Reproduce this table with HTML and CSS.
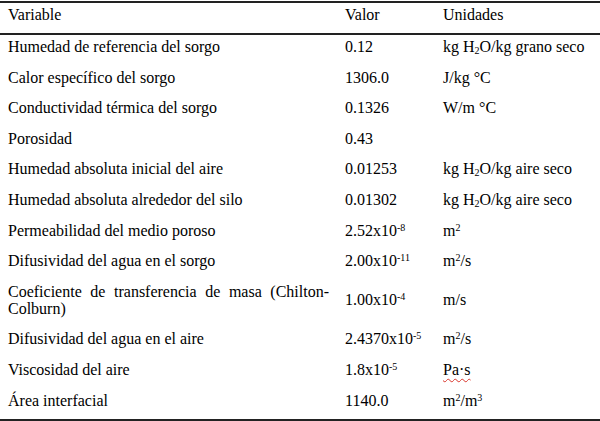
FILE: index.html
```html
<!DOCTYPE html>
<html lang="es">
<head>
<meta charset="utf-8">
<title>Tabla de parámetros</title>
<link rel="stylesheet" href="styles.css">
</head>
<body>
<table class="params">
  <colgroup>
    <col class="c-var">
    <col class="c-val">
    <col class="c-unit">
  </colgroup>
  <thead>
    <tr><th>Variable</th><th>Valor</th><th>Unidades</th></tr>
  </thead>
  <tbody>
    <tr><td>Humedad de referencia del sorgo</td><td>0.12</td><td>kg H<sub>2</sub>O/kg grano seco</td></tr>
    <tr><td>Calor específico del sorgo</td><td>1306.0</td><td>J/kg °C</td></tr>
    <tr><td>Conductividad térmica del sorgo</td><td>0.1326</td><td>W/m °C</td></tr>
    <tr><td>Porosidad</td><td>0.43</td><td></td></tr>
    <tr><td>Humedad absoluta inicial del aire</td><td>0.01253</td><td>kg H<sub>2</sub>O/kg aire seco</td></tr>
    <tr><td>Humedad absoluta alrededor del silo</td><td>0.01302</td><td>kg H<sub>2</sub>O/kg aire seco</td></tr>
    <tr><td>Permeabilidad del medio poroso</td><td>2.52x10<sup>-8</sup></td><td>m<sup>2</sup></td></tr>
    <tr><td>Difusividad del agua en el sorgo</td><td>2.00x10<sup>-11</sup></td><td>m<sup>2</sup>/s</td></tr>
    <tr class="tall"><td class="just">Coeficiente de transferencia de masa (Chilton-Colburn)</td><td>1.00x10<sup>-4</sup></td><td>m/s</td></tr>
    <tr><td>Difusividad del agua en el aire</td><td>2.4370x10<sup>-5</sup></td><td>m<sup>2</sup>/s</td></tr>
    <tr><td>Viscosidad del aire</td><td>1.8x10<sup>-5</sup></td><td><span class="spell">Pa·s</span></td></tr>
    <tr><td>Área interfacial</td><td>1140.0</td><td>m<sup>2</sup>/m<sup>3</sup></td></tr>
  </tbody>
</table>
</body>
</html>
```
FILE: styles.css
```css
html, body {
  margin: 0;
  padding: 0;
  background: #ffffff;
}
body {
  padding-top: 1px;
  font-family: "Liberation Serif", "Times New Roman", serif;
  font-size: 16px;
  color: #000000;
}
.params {
  width: 600px;
  border-collapse: collapse;
  table-layout: fixed;
  font-family: "Liberation Serif", "Times New Roman", serif;
  font-size: 16px;
  color: #000000;
  border-top: 2px solid #222222;
  border-bottom: 2px solid #222222;
}
.c-var { width: 345px; }
.c-val { width: 98px; }
.c-unit { width: 157px; }
.params th,
.params td {
  text-align: left;
  font-weight: normal;
  line-height: 17px;
  padding: 3px 16px 10.6px 8px;
  vertical-align: middle;
  white-space: nowrap;
}
.params th {
  padding-top: 3px;
  padding-bottom: 10px;
  border-bottom: 2px solid #222222;
}
.params td.just {
  white-space: normal;
  text-align: justify;
}
.params tr > :nth-child(n+2) {
  padding-left: 0;
  padding-right: 0;
}
sup, sub {
  font-size: 10px;
  line-height: 0;
}
sup { vertical-align: 5px; }
sub { vertical-align: -2px; }
.spell {
  text-decoration: underline wavy #d9352b;
  text-decoration-thickness: 1px;
  text-underline-offset: 3px;
}
```
